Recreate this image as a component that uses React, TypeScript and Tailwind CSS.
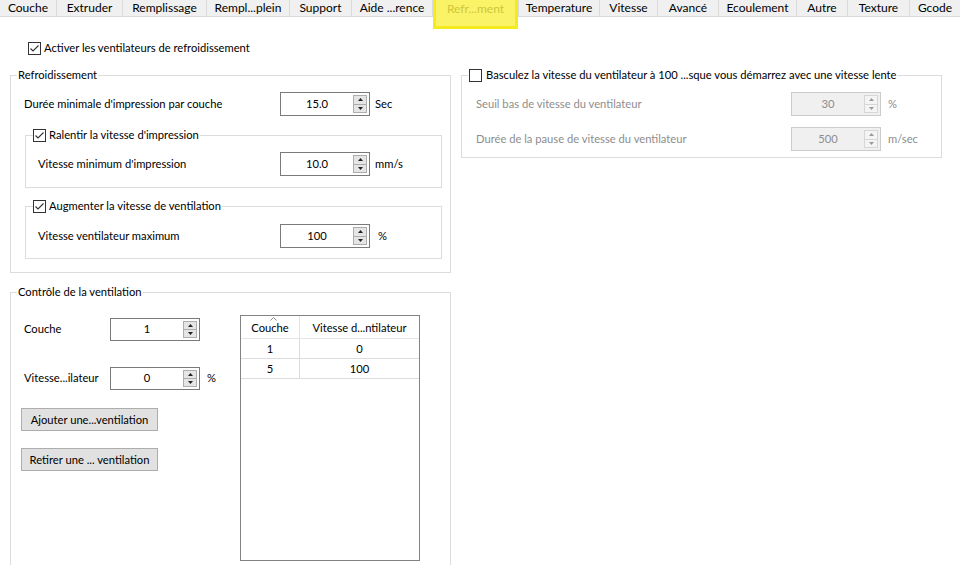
import type { ReactNode } from 'react';

const tabs: [string, string][] = [
  ['Couche', 'w-[57px]'],
  ['Extruder', 'w-[66px]'],
  ['Remplissage', 'w-[84px]'],
  ['Rempl...plein', 'w-[83px]'],
  ['Support', 'w-[62px]'],
  ['Aide ...rence', 'w-[81px]'],
  ['Refr...ment', 'w-[86px]'],
  ['Temperature', 'w-[81px]'],
  ['Vitesse', 'w-[58px]'],
  ['Avancé', 'w-[61px]'],
  ['Ecoulement', 'w-[78px]'],
  ['Autre', 'w-[51px]'],
  ['Texture', 'w-[62px]'],
  ['Gcode', 'w-[50px]'],
];

function TabBar() {
  return (
    <div className="flex h-[17px] bg-[#f0f0f0] border-b border-[#d9d9d9] text-[12px]">
      {tabs.map(([label, w]) => {
        const active = label === 'Refr...ment';
        return (
          <div
            key={label}
            className={`${w} relative flex shrink-0 items-center justify-center whitespace-nowrap border-r border-[#dadada] last:border-r-0 leading-[16px]`}
          >
            {active ? (
              <div className="absolute left-0 top-0 z-10 flex h-[29px] w-full justify-center border-[3px] border-t-0 border-[#f4ea1e] bg-[#faf368] pt-[1px] text-[#cfc63c]">
                {label}
              </div>
            ) : (
              label
            )}
          </div>
        );
      })}
    </div>
  );
}

function CheckBox({ checked }: { checked: boolean }) {
  return (
    <svg width="13" height="13" viewBox="0 0 13 13" className="shrink-0">
      <rect x="0.5" y="0.5" width="12" height="12" fill="#fff" stroke="#333" />
      {checked && <polyline points="2.5,6.5 5,9 10.5,3.5" fill="none" stroke="#333" strokeWidth="1.1" />}
    </svg>
  );
}

function Arrow({ up, disabled }: { up: boolean; disabled?: boolean }) {
  return (
    <svg width="5" height="3" viewBox="0 0 5 3">
      <polygon points={up ? '0,3 5,3 2.5,0' : '0,0 5,0 2.5,3'} fill={disabled ? '#9a9a9a' : '#222'} />
    </svg>
  );
}

function SpinBox({ value, disabled, short }: { value: string; disabled?: boolean; short?: boolean }) {
  return (
    <div
      className={`flex w-[90px] shrink-0 border ${short ? 'h-[23px]' : 'h-[24px]'} ${
        disabled ? 'border-[#cccccc] bg-[#f0f0f0] text-[#8d8d8d]' : 'border-[#7a7a7a] bg-white text-black'
      }`}
    >
      <div className="flex flex-1 items-center justify-center">{value}</div>
      <div className="flex w-[16px] flex-col py-[2px] pr-[2px]">
        <div
          className={`flex flex-1 items-center justify-center border ${
            disabled ? 'border-[#d6d6d6] bg-[#f4f4f4]' : 'border-[#adadad] bg-[#e5e5e5]'
          }`}
        >
          <Arrow up disabled={disabled} />
        </div>
        <div
          className={`flex flex-1 items-center justify-center border border-t-0 ${
            disabled ? 'border-[#d6d6d6] bg-[#f4f4f4]' : 'border-[#adadad] bg-[#e5e5e5]'
          }`}
        >
          <Arrow up={false} disabled={disabled} />
        </div>
      </div>
    </div>
  );
}

function Group({ title, className, children }: { title: ReactNode; className: string; children: ReactNode }) {
  return (
    <fieldset className={`border border-[#dcdcdc] ${className}`}>
      <legend className="ml-[6px] whitespace-nowrap px-[1px] leading-[16px]">{title}</legend>
      {children}
    </fieldset>
  );
}

function CheckTitle({ label, checked }: { label: string; checked: boolean }) {
  return (
    <span className="flex items-center gap-[3px] whitespace-nowrap">
      <CheckBox checked={checked} />
      {label}
    </span>
  );
}

function Button({ children }: { children: ReactNode }) {
  return (
    <div className="ml-[-3px] flex h-[23px] w-[137px] items-center justify-center whitespace-nowrap border border-[#adadad] bg-[#e1e1e1]">
      {children}
    </div>
  );
}

export default function App() {
  return (
    <div className="h-[565px] w-[960px] overflow-hidden bg-white font-['Lato',sans-serif] text-[11.2px] leading-[16px] text-black">
      <TabBar />
      <div className="pl-[10px] pt-[23px]">
        <div className="flex h-[16px] items-center gap-[3px] pl-[18px]">
          <CheckBox checked />
          Activer les ventilateurs de refroidissement
        </div>

        <div className="mt-[11px] flex items-start gap-[10px]">
          <div className="flex w-[441px] shrink-0 flex-col">
            <Group title="Refroidissement" className="pb-[13px]">
              <div className="mt-[9px] flex h-[24px] items-center pl-[13px]">
                <span className="w-[256px]">Durée minimale d'impression par couche</span>
                <SpinBox value="15.0" />
                <span className="ml-[5px]">Sec</span>
              </div>

              <fieldset className="ml-[14px] mr-[8px] mt-[11px] border border-[#dcdcdc] pb-[11px]">
                <legend className="ml-[7px] pr-[1px] leading-[16px]">
                  <CheckTitle label="Ralentir la vitesse d'impression" checked />
                </legend>
                <div className="mt-[9px] flex h-[24px] items-center pl-[12px]">
                  <span className="w-[242px]">Vitesse minimum d'impression</span>
                  <SpinBox value="10.0" />
                  <span className="ml-[5px]">mm/s</span>
                </div>
              </fieldset>

              <fieldset className="ml-[14px] mr-[8px] mt-[10px] border border-[#dcdcdc] pb-[10px]">
                <legend className="ml-[7px] pr-[1px] leading-[16px]">
                  <CheckTitle label="Augmenter la vitesse de ventilation" checked />
                </legend>
                <div className="mt-[10px] flex h-[24px] items-center pl-[12px]">
                  <span className="w-[242px]">Vitesse ventilateur maximum</span>
                  <SpinBox value="100" />
                  <span className="ml-[8px]">%</span>
                </div>
              </fieldset>
            </Group>

            <Group title="Contrôle de la ventilation" className="mt-[11px] h-[300px]">
              <div className="flex pl-[13px]">
                <div className="flex w-[216px] shrink-0 flex-col">
                  <div className="mt-[17px] flex h-[24px] items-center">
                    <span className="w-[86px] whitespace-nowrap">Couche</span>
                    <SpinBox value="1" short />
                  </div>
                  <div className="mt-[25px] flex h-[24px] items-center">
                    <span className="w-[86px] whitespace-nowrap">Vitesse...ilateur</span>
                    <SpinBox value="0" short />
                    <span className="ml-[7px]">%</span>
                  </div>
                  <div className="mt-[18px]">
                    <Button>Ajouter une...ventilation</Button>
                  </div>
                  <div className="mt-[17px]">
                    <Button>Retirer une ... ventilation</Button>
                  </div>
                </div>

                <div className="mt-[15px] h-[246px] w-[180px] shrink-0 border border-[#828282] bg-white">
                  <div className="flex h-[23px] border-b border-[#e5e5e5]">
                    <div className="relative flex w-[59px] items-center justify-center border-r border-[#e5e5e5] pt-[1px]">
                      <svg width="7" height="4" viewBox="0 0 7 4" className="absolute left-[29px] top-[1px]">
                        <polyline points="0.5,3.5 3.5,0.5 6.5,3.5" fill="none" stroke="#8a8a8a" />
                      </svg>
                      Couche
                    </div>
                    <div className="flex flex-1 items-center justify-center whitespace-nowrap pt-[1px]">
                      Vitesse d...ntilateur
                    </div>
                  </div>
                  {[
                    ['1', '0'],
                    ['5', '100'],
                  ].map(([c, v]) => (
                    <div key={c} className="flex h-[20px] border-b border-[#dcdcdc]">
                      <div className="flex w-[59px] items-center justify-center border-r border-[#dcdcdc]">{c}</div>
                      <div className="flex flex-1 items-center justify-center">{v}</div>
                    </div>
                  ))}
                </div>
              </div>
            </Group>
          </div>

          <Group
            title={
              <span className="flex items-center gap-[4px] whitespace-nowrap">
                <CheckBox checked={false} />
                Basculez la vitesse du ventilateur à 100 ...sque vous démarrez avec une vitesse lente
              </span>
            }
            className="w-[481px] shrink-0 pb-[6px]"
          >
            <div className="mt-[9px] flex h-[24px] items-center pl-[14px] text-[#8d8d8d]">
              <span className="w-[315px]">Seuil bas de vitesse du ventilateur</span>
              <SpinBox value="30" disabled />
              <span className="ml-[7px]">%</span>
            </div>
            <div className="mt-[11px] flex h-[24px] items-center pl-[14px] text-[#8d8d8d]">
              <span className="w-[315px]">Durée de la pause de vitesse du ventilateur</span>
              <SpinBox value="500" disabled />
              <span className="ml-[7px]">m/sec</span>
            </div>
          </Group>
        </div>
      </div>
    </div>
  );
}
